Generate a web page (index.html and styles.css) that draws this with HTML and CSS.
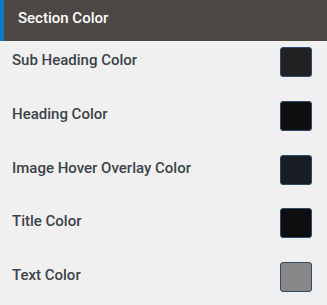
FILE: index.html
```html
<!DOCTYPE html>
<html lang="en">
<head>
  <meta charset="UTF-8" />
  <meta name="viewport" content="width=device-width, initial-scale=1.0"/>
  <title>Section Color</title>
  <link rel="stylesheet" href="styles.css">
</head>
<body>

  <div class="section-head">Section Color</div>

  <div class="color-list">
    <div class="color-row">
      <span class="color-label">Sub Heading Color</span>
      <span class="swatch sub-heading"></span>
    </div>
    <div class="color-row">
      <span class="color-label">Heading Color</span>
      <span class="swatch heading"></span>
    </div>
    <div class="color-row">
      <span class="color-label">Image Hover Overlay Color</span>
      <span class="swatch overlay"></span>
    </div>
    <div class="color-row">
      <span class="color-label">Title Color</span>
      <span class="swatch title"></span>
    </div>
    <div class="color-row">
      <span class="color-label">Text Color</span>
      <span class="swatch text"></span>
    </div>
  </div>

</body>
</html>
```

FILE: styles.css
```css
body {
  margin: 0;
  font-family: Roboto, "Liberation Sans", sans-serif;
  background-color: #f0f0f0;
}

.section-head {
  height: 41px;
  line-height: 37px;
  padding-left: 14px;
  border-left: 4px solid #0a7bc2;
  background-color: #4d4846;
  color: #ffffff;
  font-size: 15px;
  font-weight: 500;
}

.color-list {
  display: flex;
  flex-direction: column;
  gap: 23.75px;
  padding: 6px 15px 0 12px;
}

.color-row {
  display: flex;
  justify-content: space-between;
  align-items: flex-start;
}

.color-label {
  padding-top: 4px;
  font-size: 15px;
  font-weight: 500;
  color: #3c434a;
}

.swatch {
  width: 30px;
  height: 28px;
  border: 1px solid #2b4b6b;
  border-radius: 3px;
}

.sub-heading { background-color: #222222; }
.heading { background-color: #0f0f0f; }
.overlay { background-color: #1b1d25; }
.title { background-color: #0e0e0e; }
.text { background-color: #888888; }
```
